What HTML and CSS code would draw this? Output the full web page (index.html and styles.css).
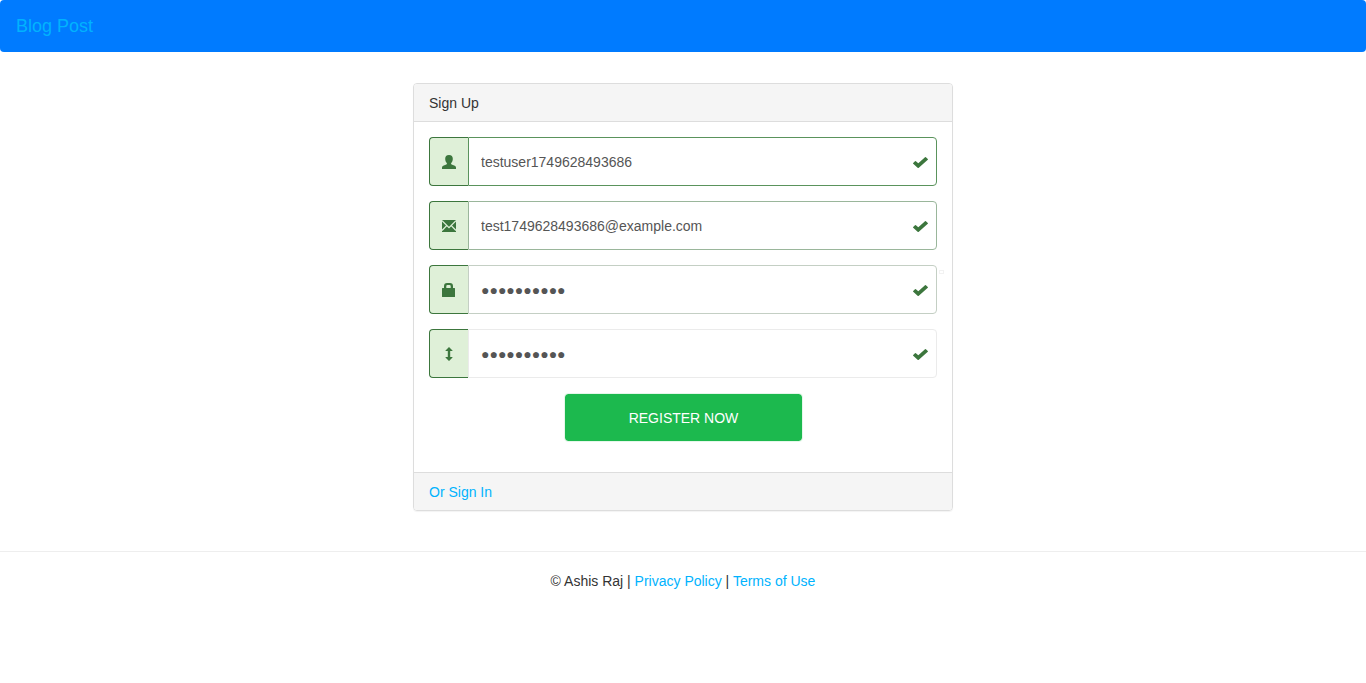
FILE: index.html
```
<!DOCTYPE html>
<html lang="en">
<head>
<meta charset="utf-8">
<title>Blog Post</title>
<link rel="stylesheet" href="styles.css">
</head>
<body>
<nav class="navbar"><a class="brand" href="#">Blog Post</a></nav>
<main class="panel">
  <div class="panel-heading">Sign Up</div>
  <form class="panel-body">
    <div class="field field-user">
      <span class="addon"><svg class="icon" viewBox="0 0 14 14"><path d="M7 0C4.300 0 3.200 1.500 3.200 3.700c0 1.900.6 3.400 1.600 4.300.3.600.1 1.100-.5 1.400L1.200 10.700C.4 11.100 0 11.700 0 12.500V14h14v-1.500c0-.8-.4-1.400-1.200-1.800L9.700 9.400c-.6-.3-.8-.8-.5-1.400 1-.9 1.600-2.400 1.600-4.300C10.800 1.500 9.700 0 7 0z"/></svg></span>
      <input class="control" type="text" value="testuser1749628493686">
      <svg class="check" viewBox="0 0 15 11"><path d="M.2 5.900 2 4.200q.4-.4.900 0L5.300 6.200 12 .2q.5-.4.9 0l1.900 1.700q.4.400 0 .8L5.800 10.700q-.6.600-1.200 0L.2 6.800q-.4-.4 0-.9z"/></svg>
    </div>
    <div class="field field-email">
      <span class="addon"><svg class="icon" viewBox="0 0 14 14"><path d="M0 1h14v12H0z"/><path class="seam" d="M0 1.600 7 8.600 14 1.600M0 11.500 4.700 6.600M14 11.500 9.300 6.600"/></svg></span>
      <input class="control" type="text" value="test1749628493686@example.com">
      <svg class="check" viewBox="0 0 15 11"><path d="M.2 5.900 2 4.200q.4-.4.900 0L5.300 6.200 12 .2q.5-.4.9 0l1.900 1.700q.4.400 0 .8L5.800 10.700q-.6.600-1.200 0L.2 6.800q-.4-.4 0-.9z"/></svg>
    </div>
    <div class="field field-password">
      <span class="addon"><svg class="icon" viewBox="0 0 14 14"><path fill-rule="evenodd" d="M2 5V3.200Q2 0 5 0h3q3 0 3 3.200V5h1.500q.5 0 .5.500v8q0 .5-.5.500H.5q-.5 0-.5-.5v-8Q0 5 .5 5zM4.300 5h4.400V3.300Q8.700 2 7.500 2h-2Q4.300 2 4.300 3.300z"/></svg></span>
      <input class="control" type="text" value="●●●●●●●●●●">
      <svg class="check" viewBox="0 0 15 11"><path d="M.2 5.900 2 4.200q.4-.4.900 0L5.300 6.200 12 .2q.5-.4.9 0l1.900 1.700q.4.400 0 .8L5.800 10.700q-.6.600-1.200 0L.2 6.800q-.4-.4 0-.9z"/></svg>
      <span class="mark"></span>
    </div>
    <div class="field field-confirm">
      <span class="addon"><svg class="icon" viewBox="0 0 14 14"><path d="M7 0l3.500 3.500v.5H8.200v6h2.300v.5L7 14l-3.500-3.500V10h2.300V4H3.500v-.5z"/></svg></span>
      <input class="control" type="text" value="●●●●●●●●●●">
      <svg class="check" viewBox="0 0 15 11"><path d="M.2 5.900 2 4.200q.4-.4.900 0L5.300 6.200 12 .2q.5-.4.9 0l1.900 1.700q.4.400 0 .8L5.800 10.700q-.6.600-1.200 0L.2 6.800q-.4-.4 0-.9z"/></svg>
    </div>
    <button class="register" type="button">REGISTER NOW</button>
  </form>
  <div class="panel-footer"><a href="#">Or Sign In</a></div>
</main>
<footer class="footer">© Ashis Raj | <a href="#">Privacy Policy</a> | <a href="#">Terms of Use</a></footer>
</body>
</html>
```
FILE: styles.css
```
* { box-sizing: border-box; }
body {
  margin: 0;
  font: 14px/20px "Liberation Sans", Arial, sans-serif;
  color: #333;
  background: #fff;
}
a { color: #00b3fe; text-decoration: none; }
.navbar {
  height: 52px;
  padding: 16px;
  background: #007bff;
  border-radius: 4px;
}
.brand { display: block; font-size: 18px; color: #00b3fe; }
.panel {
  width: 540px;
  margin: 31px auto 40px;
  border: 1px solid #ddd;
  border-radius: 4px;
  box-shadow: 0 1px 1px rgba(0, 0, 0, .05);
}
.panel-heading {
  height: 38px;
  padding: 9px 15px;
  background: #f5f5f5;
  border-bottom: 1px solid #ddd;
  border-radius: 3px 3px 0 0;
}
.panel-body {
  display: flex;
  flex-direction: column;
  gap: 15px;
  height: 350px;
  padding: 15px;
}
.field { position: relative; display: flex; height: 49px; }
.field-user { --edge: #5a935c; }
.field-email { --edge: #9ab69b; }
.field-password { --edge: #c4cfc4; }
.field-confirm { --edge: #ebebeb; }
.addon {
  display: flex;
  align-items: center;
  justify-content: center;
  width: 39px;
  background: #dff0d8;
  border: 1px solid #3c763d;
  border-right: 0;
  border-radius: 4px 0 0 4px;
}
.icon { width: 14px; height: 14px; fill: #3c763d; }
.seam { fill: none; stroke: #dff0d8; stroke-width: 1.3; }
.control {
  flex: 1;
  min-width: 0;
  padding: 6px 42px 6px 12px;
  font: inherit;
  color: #555;
  background: #fff;
  border: 1px solid var(--edge);
  border-radius: 0 4px 4px 0;
  outline: 0;
}
.check {
  position: absolute;
  top: 20px;
  right: 9px;
  width: 15px;
  height: 11px;
  fill: #3c763d;
}
.mark {
  position: absolute;
  top: 5px;
  right: -7px;
  width: 5px;
  height: 4px;
  border: 1px solid #f2f2f2;
}
.register {
  align-self: center;
  width: 239px;
  height: 49px;
  margin-left: 1px;
  padding: 0;
  font: 14px/20px "Liberation Sans", Arial, sans-serif;
  color: #fff;
  background: #1cb94e;
  background-clip: padding-box;
  border: 1px solid #e5f7ea;
  border-radius: 4px;
}
.panel-footer {
  height: 38px;
  padding: 9px 15px;
  background: #f5f5f5;
  border-top: 1px solid #ddd;
  border-radius: 0 0 3px 3px;
}
.footer {
  padding-top: 19px;
  border-top: 1px solid #eee;
  text-align: center;
}
```
